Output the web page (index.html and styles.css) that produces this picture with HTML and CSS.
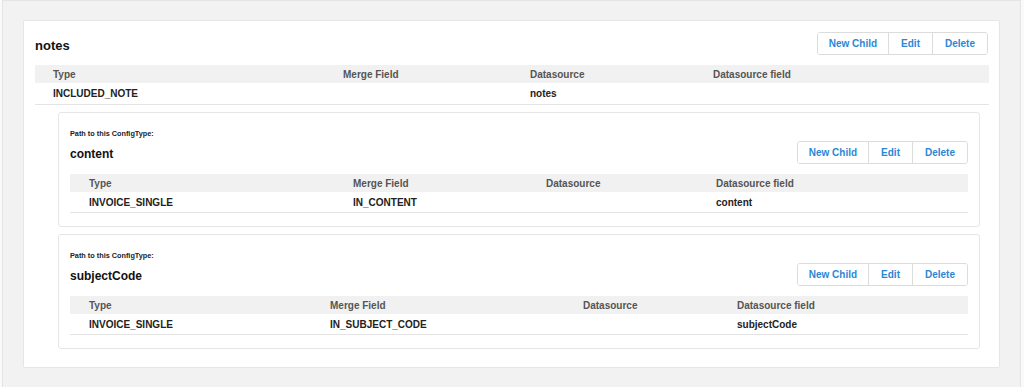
FILE: index.html
```html
<!DOCTYPE html>
<html lang="en">
<head>
    <meta charset="UTF-8">
    <title>Config Types</title>
    <link rel="stylesheet" href="styles.css">
</head>
<body>
<div class="pagina">
    <div class="cartao">
        <div class="cabecalho">
            <h2 class="titulo">notes</h2>
            <div class="botoes">
                <button>New Child</button>
                <button>Edit</button>
                <button>Delete</button>
            </div>
        </div>
        <table class="tabela">
            <colgroup><col class="c1a"><col class="c1b"><col class="c1c"><col class="c1d"></colgroup>
            <tr><th>Type</th><th>Merge Field</th><th>Datasource</th><th>Datasource field</th></tr>
            <tr><td>INCLUDED_NOTE</td><td></td><td>notes</td><td></td></tr>
        </table>

        <div class="filhos">
            <div class="cartao filho">
                <div class="caminho">Path to this ConfigType:</div>
                <div class="cabecalho">
                    <h3 class="titulo menor">content</h3>
                    <div class="botoes">
                        <button>New Child</button>
                        <button>Edit</button>
                        <button>Delete</button>
                    </div>
                </div>
                <table class="tabela interna">
                    <colgroup><col class="c2a"><col class="c2b"><col class="c2c"><col class="c2d"></colgroup>
                    <tr><th>Type</th><th>Merge Field</th><th>Datasource</th><th>Datasource field</th></tr>
                    <tr><td>INVOICE_SINGLE</td><td>IN_CONTENT</td><td></td><td>content</td></tr>
                </table>
            </div>

            <div class="cartao filho">
                <div class="caminho">Path to this ConfigType:</div>
                <div class="cabecalho">
                    <h3 class="titulo menor">subjectCode</h3>
                    <div class="botoes">
                        <button>New Child</button>
                        <button>Edit</button>
                        <button>Delete</button>
                    </div>
                </div>
                <table class="tabela interna">
                    <colgroup><col class="c3a"><col class="c3b"><col class="c3c"><col class="c3d"></colgroup>
                    <tr><th>Type</th><th>Merge Field</th><th>Datasource</th><th>Datasource field</th></tr>
                    <tr><td>INVOICE_SINGLE</td><td>IN_SUBJECT_CODE</td><td></td><td>subjectCode</td></tr>
                </table>
            </div>
        </div>
    </div>
</div>
</body>
</html>
```

FILE: styles.css
```css
body {
    margin: 0;
    background-color: #fafafa;
    font-family: "Liberation Sans", Arial, sans-serif;
}

/* fundo cinza em volta de tudo */
.pagina {
    margin-left: 2px;
    width: 1019px;
    min-height: 400px;
    box-sizing: border-box;
    padding: 19px 20px;
    background-color: #f2f2f2;
    border: 1px solid #e4e4e4;
}

.cartao {
    background-color: #fff;
    border: 1px solid #e6e6e6;
    border-radius: 2px;
    padding: 11px;
}

.cabecalho {
    display: flex;
    justify-content: space-between;
    align-items: center;
    height: 23px;
    margin-bottom: 10px;
}

.titulo {
    margin: 0;
    padding-top: 3px;
    font-size: 13px;
    color: #111;
}

.menor {
    font-size: 12px;
}

.botoes {
    display: flex;
    height: 23px;
    box-sizing: border-box;
    border: 1px solid #dcdcdc;
    border-radius: 3px;
    overflow: hidden;
}

.botoes button {
    border: none;
    border-left: 1px solid #dcdcdc;
    background-color: #fff;
    padding: 0 12px;
    font-family: inherit;
    font-size: 10px;
    font-weight: bold;
    color: #2b87d6;
}

.botoes button:first-child {
    border-left: none;
    padding: 0 11px;
}

/* tabelas */
.tabela {
    width: 100%;
    table-layout: fixed;
    border-collapse: collapse;
    font-size: 10px;
    font-weight: bold;
}

.tabela th {
    height: 18px;
    padding: 0 18px;
    text-align: left;
    background-color: #f1f1f1;
    color: #555;
}

.tabela td {
    height: 21px;
    padding: 0 18px;
    color: #222;
    border-bottom: 1px solid #e4e4e4;
}

.interna th, .interna td {
    padding: 0 19px;
}

.interna td {
    height: 20px;
}

.c1a { width: 290px; }
.c1b { width: 187px; }
.c1c { width: 183px; }
.c1d { width: 294px; }

.c2a { width: 264px; }
.c2b { width: 193px; }
.c2c { width: 170px; }
.c2d { width: 271px; }

.c3a { width: 241px; }
.c3b { width: 253px; }
.c3c { width: 154px; }
.c3d { width: 250px; }

/* cartoes filhos */
.filhos {
    margin: 7px 8px 0 23px;
}

.filho {
    padding: 12px 11px 13px;
    margin-bottom: 7px;
    border-radius: 3px;
}

.caminho {
    font-size: 7.3px;
    font-weight: bold;
    line-height: 10px;
    color: #222;
    margin: 4px 0 2px;
}
```
